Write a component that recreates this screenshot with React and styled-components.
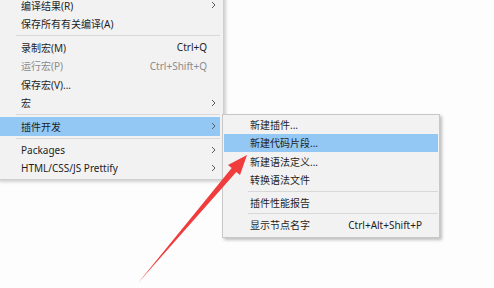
import React from "react";
import styled, { createGlobalStyle } from "styled-components";

const GlobalStyle = createGlobalStyle`
  html, body {
    margin: 0;
    padding: 0;
    background: #fdfdfd;
  }
  body {
    font-family: "Noto Sans", "Noto Sans CJK SC", sans-serif;
  }
`;

const mainItems = [
  { label: "编译结果(R)", sub: true },
  { label: "保存所有有关编译(A)" },
  { sep: true },
  { label: "录制宏(M)", key: "Ctrl+Q" },
  { label: "运行宏(P)", key: "Ctrl+Shift+Q", disabled: true },
  { label: "保存宏(V)..." },
  { label: "宏", sub: true },
  { sep: true },
  { label: "插件开发", sub: true, active: true },
  { sep: true },
  { label: "Packages", sub: true },
  { label: "HTML/CSS/JS Prettify", sub: true },
];

const subItems = [
  { label: "新建插件..." },
  { label: "新建代码片段...", active: true },
  { label: "新建语法定义..." },
  { label: "转换语法文件" },
  { sep: true },
  { label: "插件性能报告" },
  { sep: true },
  { label: "显示节点名字", key: "Ctrl+Alt+Shift+P" },
];

const Chevron = () => (
  <svg width="5" height="8" viewBox="0 0 5 8">
    <path d="M1 1 L4 4 L1 7" fill="none" stroke="#5a5a5a" strokeWidth="1" />
  </svg>
);

const App = () => {
  return (
    <Page>
      <GlobalStyle />
      <MainMenu>
        {mainItems.map((item, i) =>
          item.sep ? (
            <Separator key={i} $h={5} $indent={16} />
          ) : (
            <Item
              key={i}
              $active={item.active}
              $disabled={item.disabled}
              $pl={21}
            >
              <Label>{item.label}</Label>
              {item.key && <Shortcut>{item.key}</Shortcut>}
              <ArrowCell>{item.sub && <Chevron />}</ArrowCell>
            </Item>
          )
        )}
      </MainMenu>

      <SubMenu>
        {subItems.map((item, i) =>
          item.sep ? (
            <Separator key={i} $h={4} $indent={24} />
          ) : (
            <Item key={i} $active={item.active} $pl={26}>
              <Label>{item.label}</Label>
              {item.key && <Shortcut $right={16}>{item.key}</Shortcut>}
            </Item>
          )
        )}
      </SubMenu>

      <Pointer width="494" height="288" viewBox="0 0 494 288">
        <polygon
          points="138,283 231.7,168.1 228,165 247,155 240,175 236.3,171.9"
          fill="#f03c3c"
        />
      </Pointer>
    </Page>
  );
};

const Page = styled.div`
  position: relative;
  width: 494px;
  height: 288px;
  overflow: hidden;
  background: #fdfdfd;
`;

const MainMenu = styled.div`
  width: 220px;
  margin-left: -3px;
  margin-top: -7px;
  padding: 2px 3px 1px 2px;
  background: #f2f2f2;
  border: 1px solid #cfcfcf;
  box-shadow: 2px 2px 3px rgba(0, 0, 0, 0.18);
`;

const SubMenu = styled.div`
  position: absolute;
  left: 222px;
  top: 114px;
  width: 214px;
  padding: 0 1px 3px 1px;
  background: #f2f2f2;
  border: 1px solid #c8c8c8;
  box-shadow: 2px 2px 3px rgba(0, 0, 0, 0.25);
`;

const Item = styled.div`
  display: flex;
  align-items: center;
  height: 18.5px;
  padding-left: ${(p) => p.$pl}px;
  background: ${(p) => (p.$active ? "#93c8f4" : "transparent")};
  color: ${(p) => (p.$disabled ? "#8c8c8c" : "#1e1e1e")};
  font-size: 10px;
  white-space: nowrap;
`;

const Label = styled.span`
  flex: 1;
`;

const Shortcut = styled.span`
  margin-right: ${(p) => p.$right || 0}px;
`;

const ArrowCell = styled.span`
  display: flex;
  align-items: center;
  justify-content: center;
  width: 13px;
`;

const Separator = styled.div`
  height: ${(p) => p.$h}px;
  display: flex;
  align-items: center;
  padding-left: ${(p) => p.$indent}px;

  &::after {
    content: "";
    flex: 1;
    height: 1px;
    background: #d8d8d8;
  }
`;

const Pointer = styled.svg`
  position: absolute;
  left: 0;
  top: 0;
  pointer-events: none;
`;

export default App;
